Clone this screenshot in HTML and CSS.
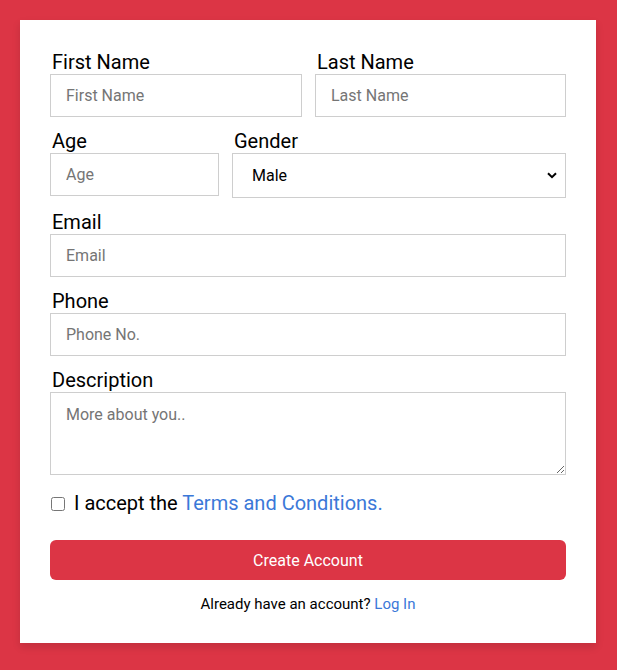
FILE: index.html
```html
<!DOCTYPE html>
<html lang="en">
<head>
<meta charset="utf-8">
<title>Create Account</title>
<link rel="stylesheet" href="styles.css">
</head>
<body>
<form class="card">
  <div class="row row-half">
    <div class="group">
      <label class="label" for="fn">First Name</label>
      <input class="field" id="fn" type="text" placeholder="First Name">
    </div>
    <div class="group">
      <label class="label" for="ln">Last Name</label>
      <input class="field" id="ln" type="text" placeholder="Last Name">
    </div>
  </div>
  <div class="row row-third">
    <div class="group">
      <label class="label" for="age">Age</label>
      <input class="field" id="age" type="text" placeholder="Age">
    </div>
    <div class="group">
      <label class="label" for="gender">Gender</label>
      <select class="field select" id="gender">
        <option>Male</option>
        <option>Female</option>
      </select>
    </div>
  </div>
  <div class="group">
    <label class="label" for="email">Email</label>
    <input class="field" id="email" type="text" placeholder="Email">
  </div>
  <div class="group">
    <label class="label" for="phone">Phone</label>
    <input class="field" id="phone" type="text" placeholder="Phone No.">
  </div>
  <div class="group">
    <label class="label" for="desc">Description</label>
    <textarea class="field area" id="desc" placeholder="More about you.."></textarea>
  </div>
  <label class="check">
    <input class="box" type="checkbox">
    <span>I accept the <a class="link" href="#">Terms and Conditions.</a></span>
  </label>
  <button class="btn" type="button">Create Account</button>
  <p class="foot">Already have an account? <a class="link" href="#">Log In</a></p>
</form>
</body>
</html>
```
FILE: styles.css
```css
* { box-sizing: border-box; }
html, body { margin: 0; }
body {
  background: #dc3545;
  padding: 20px;
  min-height: 670px;
  font-family: Roboto, "Liberation Sans", Arial, sans-serif;
  color: #000;
}
.card {
  background: #fff;
  width: 576px;
  padding: 31px 30px 30px;
  box-shadow: 0 4px 8px rgba(0,0,0,0.12);
  display: flex;
  flex-direction: column;
}
.row {
  display: grid;
  column-gap: 13px;
}
.row-half { grid-template-columns: 252px 251px; }
.row-third { grid-template-columns: 169px 334px; }
.group {
  display: flex;
  flex-direction: column;
  margin-bottom: 13px;
}
.label {
  font-size: 20px;
  line-height: 23px;
  padding-left: 2px;
  height: 23px;
}
.field {
  display: block;
  width: 100%;
  height: 43px;
  border: 1px solid #cecece;
  border-radius: 0;
  padding: 0 15px;
  font-family: Roboto, "Liberation Sans", Arial, sans-serif;
  font-size: 16px;
  color: #000;
  background: #fff;
  outline: none;
}
.field::placeholder { color: #757575; }
.select {
  height: 45px;
  padding: 0 30px 0 19px;
  appearance: none;
  -webkit-appearance: none;
  background-image: url("data:image/svg+xml,%3Csvg xmlns='http://www.w3.org/2000/svg' width='10' height='7' viewBox='0 0 10 7'%3E%3Cpath d='M1 1.2 L5 5.2 L9 1.2' fill='none' stroke='%23000' stroke-width='2'/%3E%3C/svg%3E");
  background-repeat: no-repeat;
  background-position: right 8px center;
  background-size: 10px 7px;
}
.area {
  height: 83px;
  padding: 12px 15px;
  resize: vertical;
  margin-bottom: 4px;
}
.check {
  display: flex;
  align-items: center;
  font-size: 20px;
  line-height: 23px;
}
.box {
  width: 14px;
  height: 14px;
  margin: 0 9px 0 1px;
}
.link { color: #3b78d8; text-decoration: none; }
.btn {
  margin-top: 25px;
  height: 40px;
  border: none;
  border-radius: 6px;
  background: #dc3545;
  color: #fff;
  font-family: Roboto, "Liberation Sans", Arial, sans-serif;
  font-size: 16px;
}
.foot {
  margin: 15px 0 0;
  text-align: center;
  font-size: 15px;
  line-height: 18px;
}
```
